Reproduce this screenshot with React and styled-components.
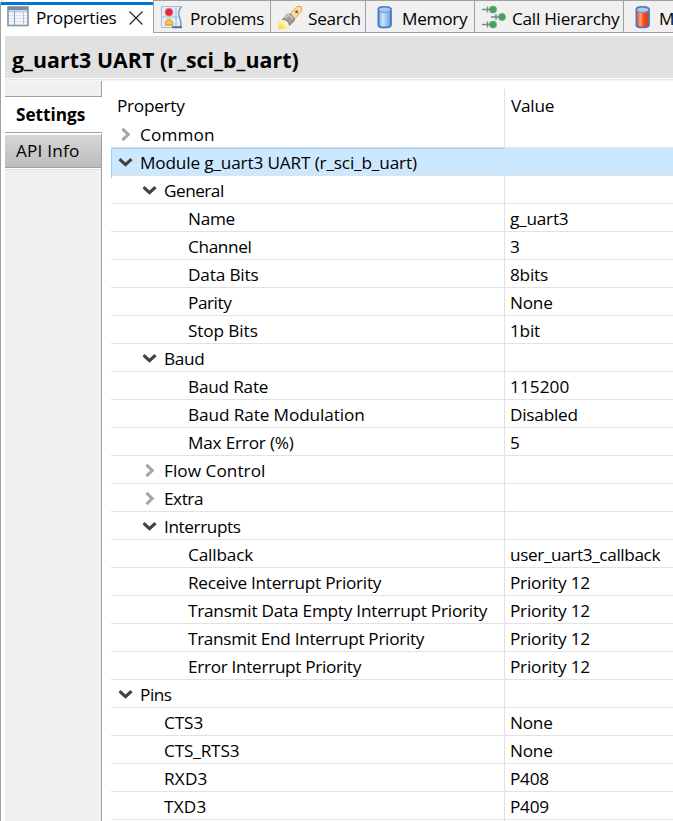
import React from "react";
import styled, { createGlobalStyle } from "styled-components";

const Global = createGlobalStyle`
  * { box-sizing: border-box; }
  body { margin: 0; background: #fff; overflow: hidden; }
`;

const Window = styled.div`
  width: 673px;
  height: 821px;
  overflow: hidden;
  display: flex;
  flex-direction: column;
  background: #fff;
  color: #000;
  font-family: "Open Sans", "Noto Sans", sans-serif;
  font-size: 17.2px;
  letter-spacing: -0.27px;
  line-height: 28px;
  white-space: nowrap;
`;

const TabBar = styled.div`
  display: flex;
  flex: none;
  height: 36px;
`;

const Tab = styled.div`
  display: flex;
  flex: none;
  width: ${(p) => p.$width}px;
  height: 33px;
  padding-left: ${(p) => p.$pad}px;
  background: #f0f0f0;
  border-top: 1px solid #a0a0a0;
  border-bottom: 1px solid #a0a0a0;
  border-right: 1px solid #a0a0a0;
  overflow: hidden;
`;

const ActiveTab = styled(Tab)`
  height: 36px;
  background: linear-gradient(#fff 0 2px, #0078d7 2px 5px, #fff 5px);
  border-bottom: 0;
  border-top: 0;
  border-right: 0;
  border-left: 1px solid #a0a0a0;
  border-radius: 4px 0 0 0;
`;

const TabIcon = styled.svg`
  flex: none;
  width: 22px;
  height: 24px;
  margin-top: ${(p) => p.$top ?? 4}px;
  overflow: visible;
`;

const TabLabel = styled.span`
  flex: none;
  width: ${(p) => (p.$width ? `${p.$width}px` : "auto")};
  margin-left: ${(p) => p.$gap}px;
  margin-top: ${(p) => p.$top ?? 4}px;
`;

const CloseIcon = styled.svg`
  flex: none;
  width: 14px;
  height: 14px;
  margin-top: 11px;
`;

const View = styled.div`
  flex: 1;
  min-height: 0;
  display: flex;
  flex-direction: column;
  border-left: 1px solid #a0a0a0;
  padding-left: 4px;
`;

const Title = styled.h1`
  flex: none;
  margin: 0;
  height: 45px;
  padding: 10px 0 0 7px;
  background: linear-gradient(#e1e1e1 0 42px, #fff 42px 43px, #e6e6e6 43px 44px, #f6f6f6 44px);
  font-size: 21.3px;
  letter-spacing: 0.08px;
  line-height: 28px;
  font-weight: 700;
`;

const Body = styled.div`
  flex: 1;
  min-height: 0;
  display: flex;
`;

const Sidebar = styled.nav`
  flex: none;
  width: 97px;
  display: flex;
  flex-direction: column;
`;

const SideFill = styled.div`
  height: ${(p) => p.$height};
  flex: ${(p) => (p.$grow ? 1 : "none")};
  background: #f0f0f0;
  border-right: 1px solid #a0a0a0;
  border-bottom: ${(p) => (p.$grow ? 0 : "1px solid #a0a0a0")};
`;

const SideSelected = styled.div`
  height: 37px;
  padding: 4px 0 0 11px;
  background: linear-gradient(#fff 0 35px, #a0a0a0 35px 36px, #fff 36px);
  font-weight: 700;
  letter-spacing: -0.02px;
`;

const SideItem = styled.div`
  height: 36px;
  padding: 2px 0 0 11px;
  border-right: 1px solid #a0a0a0;
  background: linear-gradient(#fff 0 1px, #d6d6d6 1px, #bdbdbd 33px, #a0a0a0 33px 34px, #fff 34px 35px, #e0e0e0 35px);
  letter-spacing: 0.2px;
  line-height: 29px;
`;

const Table = styled.div`
  flex: 1;
  min-width: 0;
  margin-left: 9px;
  padding-top: 8px;
`;

const Row = styled.div`
  display: grid;
  grid-template-columns: 393px 1fr;
  height: ${(p) => (p.$header ? 31 : 28)}px;
  line-height: ${(p) => (p.$header ? 33 : 29.5)}px;
  border-bottom: ${(p) => (p.$header ? 0 : "1px solid #e2e2e2")};
  background: ${(p) => (p.$selected ? "#cce8ff" : "#fff")};
`;

const NameCell = styled.div`
  display: flex;
  padding-left: ${(p) => p.$indent}px;
  letter-spacing: ${(p) => p.$spacing ?? -0.27}px;
  box-shadow: ${(p) => (p.$selected ? "inset 1px 1px 0 #99d1ff" : "none")};
`;

const ValueCell = styled.div`
  border-left: 1px solid #e2e2e2;
  padding-left: ${(p) => (p.$header ? 6 : 5)}px;
  letter-spacing: ${(p) => p.$spacing ?? -0.22}px;
`;

const Twisty = styled.svg`
  flex: none;
  width: 16px;
  height: 16px;
  margin: 6px 7px 0 0;
  fill: none;
  stroke-width: 3.1;
  stroke: ${(p) => (p.$open ? "#404040" : "#a6a6a6")};
`;

function TwistyIcon({ open }) {
  return (
    <Twisty $open={open} viewBox="0 0 16 16">
      <path d={open ? "M2.5 5.2 L8.5 10.7 L14.5 5.2" : "M5.5 2.8 L11.2 8.5 L5.5 14.2"} />
    </Twisty>
  );
}

function TableIcon() {
  return (
    <TabIcon $top={6} viewBox="0 0 22 24">
      <rect x="1" y="1" width="20" height="18.5" fill="#f3f7fc" stroke="#8793aa" strokeWidth="1.6" />
      <path d="M1 2.5H21" stroke="#7d8ba5" strokeWidth="3.4" />
      <path d="M2 5.5H20" stroke="#c3cedf" strokeWidth="2" />
      <path d="M2 9.5H20M2 12.5H20M2 15.5H20" stroke="#dde5ef" />
      <path d="M7.5 5V19" stroke="#8d9db8" />
      <path d="M16.5 5V19" stroke="#b9c5d6" />
    </TabIcon>
  );
}

function ProblemsIcon() {
  return (
    <TabIcon viewBox="0 0 22 24">
      <path d="M.5 1.5H20Q16 7 18.5 12T20 22.5H.5Z" fill="#e1effa" stroke="#a9bccf" />
      <path d="M1 12H18M15 2V22" stroke="#9fb9d8" />
      <path d="M20.5 1.5Q16.5 6 18.5 12T19.5 22" fill="none" stroke="#7798c2" strokeWidth="1.3" />
      <path d="M11 22.2H21" stroke="#4b72a9" strokeWidth="2" />
      <circle cx="8" cy="7.2" r="3.9" fill="#e3283c" stroke="#ec7481" />
      <path d="M4.5 20V17.5L7 14.5H9L11.5 17.5V20Z" fill="#ffc74c" stroke="#e9a233" strokeWidth="1.4" />
    </TabIcon>
  );
}

function SearchIcon() {
  return (
    <TabIcon viewBox="0 0 22 24">
      <defs>
        <linearGradient id="beam" x1="0" y1="1" x2="1" y2="0">
          <stop stopColor="#ffc93c" />
          <stop offset=".5" stopColor="#fff3a8" />
          <stop offset="1" stopColor="#fff" />
        </linearGradient>
      </defs>
      <path d="M.5 17L5 14 11.5 20.5 8 24H.5Z" fill="url(#beam)" />
      <path d="M12 9L19 1.5H23L24 5.5 16.5 14Z" fill="#ffdb97" stroke="#d99f50" />
      <path d="M4.5 14.5L9.5 9Q15.5 9 16.5 15.5L11.5 20.5Q10.5 14.5 4.5 14.5Z" fill="#a39c9b" stroke="#8b7c73" />
      <path d="M7 13L10.5 10Q13.5 11 14.5 14" fill="none" stroke="#d0c8c3" strokeWidth="1.8" />
      <circle cx="18.7" cy="6.8" r="1.5" fill="#5e6d80" />
    </TabIcon>
  );
}

function CylinderIcon({ filled }) {
  const id = filled ? "red" : "blue";
  return (
    <TabIcon viewBox="0 0 22 24">
      <defs>
        <linearGradient id={id}>
          <stop stopColor={filled ? "#e34a26" : "#6a9bd8"} />
          <stop offset=".32" stopColor={filled ? "#ff9c72" : "#cbe3fb"} />
          <stop offset=".6" stopColor={filled ? "#ff4713" : "#a5c9f2"} />
          <stop offset="1" stopColor={filled ? "#d5401d" : "#6496d5"} />
        </linearGradient>
      </defs>
      <path d="M4.4 4Q4.4 1.8 10.5 1.8T17 4V20.2Q17 22.4 10.5 22.4T4.4 20.2Z" fill={`url(#${id})`} stroke="#477bc0" strokeWidth="1.8" />
      <path d="M5.2 4Q10.5 .8 16.2 4V6.2Q10.5 9 5.2 6.2Z" fill="#a8cbf3" />
      <path d="M5.2 6.2Q10.5 9 16.2 6.2" fill="none" stroke="#5e90d0" />
    </TabIcon>
  );
}

function HierarchyIcon() {
  return (
    <TabIcon viewBox="0 0 22 24">
      <path d="M0 4.5H8M0 19.5H8M9 12H17M5.5 1.5V7.5M5.5 16.5V22.5M14 9V15" stroke="#7d8290" strokeWidth="1.4" />
      <g fill="#45a05a" stroke="#6fae7b">
        <circle cx="11" cy="4.5" r="3.5" />
        <circle cx="20" cy="12" r="3.5" />
        <circle cx="11" cy="19.5" r="3.5" />
      </g>
    </TabIcon>
  );
}

const rows = [
  { name: "Common", level: 0, open: false, spacing: 0.15 },
  { name: "Module g_uart3 UART (r_sci_b_uart)", level: 0, open: true, selected: true, spacing: -0.15 },
  { name: "General", level: 1, open: true, spacing: -0.5 },
  { name: "Name", level: 2, value: "g_uart3", spacing: -0.3 },
  { name: "Channel", level: 2, value: "3", spacing: -0.35 },
  { name: "Data Bits", level: 2, value: "8bits", spacing: -0.15 },
  { name: "Parity", level: 2, value: "None", spacing: -0.45 },
  { name: "Stop Bits", level: 2, value: "1bit", spacing: -0.1 },
  { name: "Baud", level: 1, open: true, spacing: -0.35 },
  { name: "Baud Rate", level: 2, value: "115200", spacing: -0.2, valueSpacing: 0.05 },
  { name: "Baud Rate Modulation", level: 2, value: "Disabled", spacing: -0.1 },
  { name: "Max Error (%)", level: 2, value: "5", spacing: -0.2 },
  { name: "Flow Control", level: 1, open: false, spacing: 0.05 },
  { name: "Extra", level: 1, open: false, spacing: -0.45 },
  { name: "Interrupts", level: 1, open: true, spacing: -0.4 },
  { name: "Callback", level: 2, value: "user_uart3_callback", spacing: -0.15, valueSpacing: -0.38 },
  { name: "Receive Interrupt Priority", level: 2, value: "Priority 12" },
  { name: "Transmit Data Empty Interrupt Priority", level: 2, value: "Priority 12", spacing: -0.23 },
  { name: "Transmit End Interrupt Priority", level: 2, value: "Priority 12", spacing: -0.31 },
  { name: "Error Interrupt Priority", level: 2, value: "Priority 12", spacing: -0.31 },
  { name: "Pins", level: 0, open: true, spacing: -0.45 },
  { name: "CTS3", level: 1, value: "None", spacing: -0.1 },
  { name: "CTS_RTS3", level: 1, value: "None", spacing: -0.15 },
  { name: "RXD3", level: 1, value: "P408", spacing: 0.2 },
  { name: "TXD3", level: 1, value: "P409", spacing: 0.2 },
];

function PropertyRow({ row }) {
  const branch = row.open !== undefined;
  return (
    <Row $selected={row.selected}>
      <NameCell $selected={row.selected} $spacing={row.spacing} $indent={row.level * 24 + (branch ? 6 : 29)}>
        {branch && <TwistyIcon open={row.open} />}
        {row.name}
      </NameCell>
      <ValueCell $spacing={row.valueSpacing}>{row.value}</ValueCell>
    </Row>
  );
}

export default function App() {
  return (
    <Window>
      <Global />
      <TabBar>
        <ActiveTab $width={153} $pad={6}>
          <TableIcon />
          <TabLabel $width={93} $gap={7}>Properties</TabLabel>
          <CloseIcon viewBox="0 0 14 14">
            <path d="M.5 .5L13.5 13.5M13.5 .5L.5 13.5" stroke="#222" strokeWidth="1.1" />
          </CloseIcon>
        </ActiveTab>
        <FirstTab $width={118} $pad={7}><ProblemsIcon /><TabLabel $gap={7}>Problems</TabLabel></FirstTab>
        <Tab $width={95} $pad={7}><SearchIcon /><TabLabel $gap={8}>Search</TabLabel></Tab>
        <Tab $width={109} $pad={8}><CylinderIcon /><TabLabel $gap={6}>Memory</TabLabel></Tab>
        <Tab $width={149} $pad={7}><HierarchyIcon /><TabLabel $gap={8}>Call Hierarchy</TabLabel></Tab>
        <Tab $width={120} $pad={8}><CylinderIcon filled /><TabLabel $gap={5}>M</TabLabel></Tab>
      </TabBar>
      <View>
        <Title>g_uart3 UART (r_sci_b_uart)</Title>
        <Body>
          <Sidebar>
            <SideFill $height="16px" />
            <SideSelected>Settings</SideSelected>
            <SideItem>API Info</SideItem>
            <SideFill $grow />
          </Sidebar>
          <Table>
            <Row $header>
              <NameCell $indent={6}>Property</NameCell>
              <ValueCell $header>Value</ValueCell>
            </Row>
            {rows.map((row) => <PropertyRow key={row.name} row={row} />)}
          </Table>
        </Body>
      </View>
    </Window>
  );
}

const FirstTab = styled(Tab)`
  border-left: 1px solid #a0a0a0;
`;
